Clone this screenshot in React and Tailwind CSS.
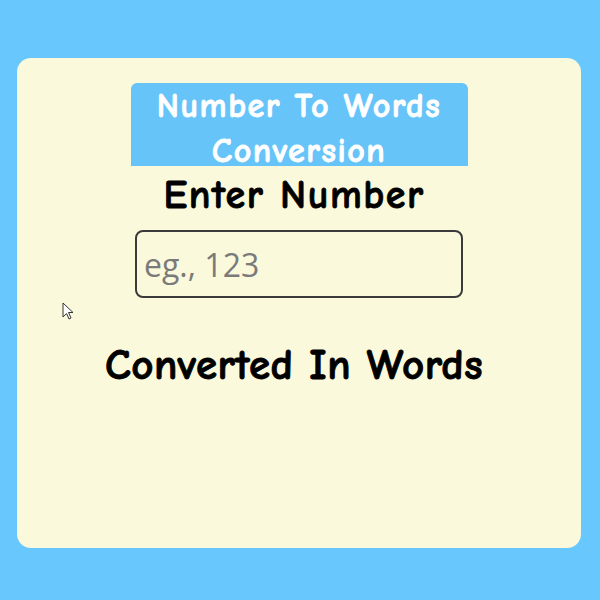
import React, { useState } from 'react';

const comic = { fontFamily: '"Comic Sans MS", "Comic Neue", cursive, sans-serif' };

export default function App() {
  const [value, setValue] = useState('');

  return (
    <div className="w-[600px] h-[600px] bg-[#68c8fd] pt-[58px] pl-[17px] relative overflow-hidden">
      <div className="w-[564px] h-[490px] bg-[#fbf9dc] rounded-[14px] flex flex-col items-center" style={comic}>
        <div className="mt-[25px] w-[337px] h-[83px] bg-[#66c4f8] rounded-t-[6px] overflow-hidden text-center text-white font-bold text-[34px] tracking-[1.5px] leading-[45px] pt-[1px] [-webkit-text-stroke:0.8px_white]">
          Number To Words Conversion
        </div>
        <h2 className="mt-[4px] -ml-[10px] text-[40px] tracking-[1.5px] font-bold leading-[50px] text-black [-webkit-text-stroke:0.8px_black]">Enter Number</h2>
        <input
          value={value}
          onChange={e => setValue(e.target.value)}
          placeholder="eg., 123"
          autoFocus
          className="mt-[10px] w-[328px] h-[68px] border-2 border-[#3a3a3a] rounded-[8px] bg-transparent px-[7px] text-[32px] text-black placeholder:text-[#7a7a7a] outline-none"
          style={{ fontFamily: '"Open Sans", "Liberation Sans", sans-serif' }}
        />
        <h2 className="mt-[40px] -ml-[10px] text-[43px] tracking-[0.5px] font-bold leading-[54px] text-black [-webkit-text-stroke:0.9px_black]">Converted In Words</h2>
      </div>
      {/* mouse pointer */}
      <svg className="absolute left-[62px] top-[302px]" width="14" height="20" viewBox="0 0 14 20">
        <path d="M1 1 L1 15 L4.5 11.5 L7 17 L9 16 L6.5 10.5 L11 10.5 Z" fill="#fff" stroke="#333" strokeWidth="1" strokeLinejoin="round" />
      </svg>
    </div>
  );
}
